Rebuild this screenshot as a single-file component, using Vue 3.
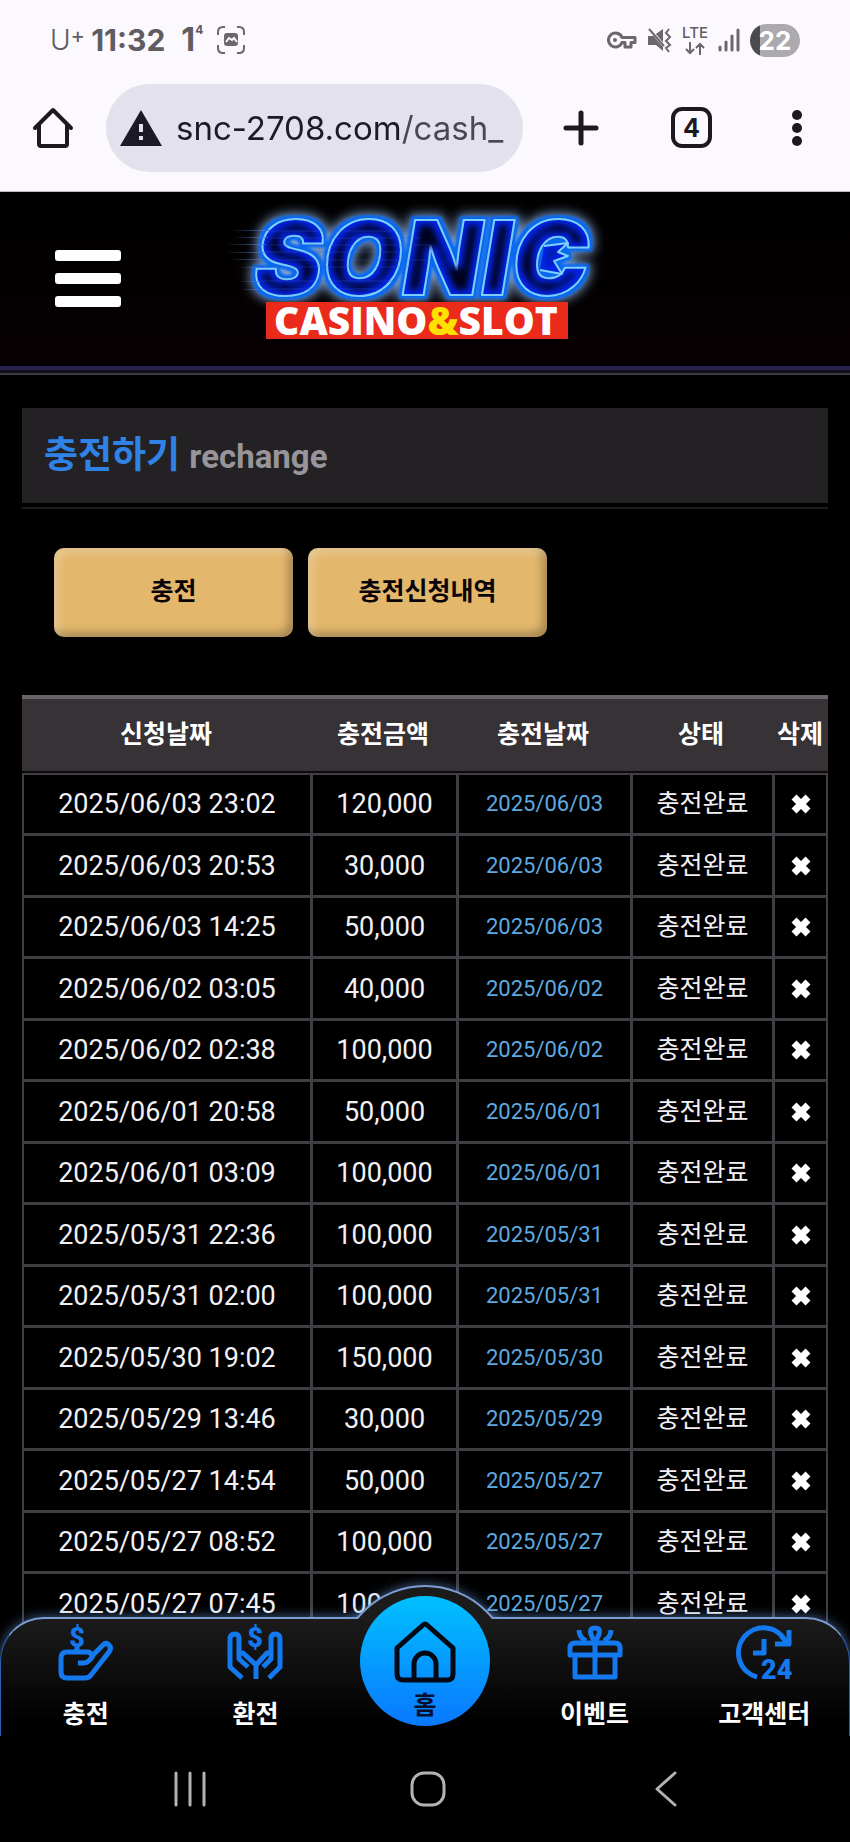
<script setup>
  import { ref } from 'vue'

  const address = ref('snc-2708.com/cash_')

  const columns = ['신청날짜', '충전금액', '충전날짜', '상태', '삭제']

  const rows = ref([
    { requested: '2025/06/03 23:02', amount: '120,000', charged: '2025/06/03' },
    { requested: '2025/06/03 20:53', amount: '30,000', charged: '2025/06/03' },
    { requested: '2025/06/03 14:25', amount: '50,000', charged: '2025/06/03' },
    { requested: '2025/06/02 03:05', amount: '40,000', charged: '2025/06/02' },
    { requested: '2025/06/02 02:38', amount: '100,000', charged: '2025/06/02' },
    { requested: '2025/06/01 20:58', amount: '50,000', charged: '2025/06/01' },
    { requested: '2025/06/01 03:09', amount: '100,000', charged: '2025/06/01' },
    { requested: '2025/05/31 22:36', amount: '100,000', charged: '2025/05/31' },
    { requested: '2025/05/31 02:00', amount: '100,000', charged: '2025/05/31' },
    { requested: '2025/05/30 19:02', amount: '150,000', charged: '2025/05/30' },
    { requested: '2025/05/29 13:46', amount: '30,000', charged: '2025/05/29' },
    { requested: '2025/05/27 14:54', amount: '50,000', charged: '2025/05/27' },
    { requested: '2025/05/27 08:52', amount: '100,000', charged: '2025/05/27' },
    { requested: '2025/05/27 07:45', amount: '100,000', charged: '2025/05/27' },
  ])

  function removeRow(index) {
    rows.value.splice(index, 1)
  }
</script>

<template>
  <div class="screen">
    <div class="status">
      <div class="status-side">
        <span class="carrier">U<sup>+</sup></span>
        <span class="clock">11:32</span>
        <span class="badge">1<sup>4</sup></span>
        <svg width="28" height="28" viewBox="0 0 28 28" fill="none" stroke="#6a676d" stroke-width="2">
          <path d="M1 9V6Q1 1 6 1H8M20 1H22Q27 1 27 6V9M27 19V22Q27 27 22 27H20M8 27H6Q1 27 1 22V19" />
          <rect x="7" y="7" width="14" height="13" rx="3" fill="#6a676d" stroke="none" />
          <path d="M9 16L12 12L15 14L17 12L20 16" stroke="#fbf8fe" />
        </svg>
      </div>
      <div class="status-side right">
        <svg width="30" height="18" viewBox="0 0 30 18" fill="none" stroke="#6a676d" stroke-width="3">
          <path d="M15 6.500A7 7 0 1 0 15 11.500H18V16H24V11.500H28V6.500Z" stroke-linejoin="round" />
          <circle cx="8" cy="9" r="2" fill="#6a676d" stroke="none" />
        </svg>
        <svg width="25" height="26" viewBox="0 0 25 26" fill="none" stroke="#6a676d" stroke-width="2">
          <path d="M1 9H6L16 2V24L9 18H1Z" fill="#6a676d" stroke="none" />
          <path d="M1 0L18 20" stroke="#fbf8fe" stroke-width="3" />
          <path d="M2 2L17 19" />
          <path d="M22 2L19 6L23 10L19 14L23 18L19 21L22 25" />
        </svg>
        <span class="lte">
          LTE
          <svg width="20" height="13" viewBox="0 0 20 13" fill="none" stroke="#6a676d" stroke-width="2">
            <path d="M5 0V11M1 7L5 11L9 7M15 13V2M11 6L15 2L19 6" />
          </svg>
        </span>
        <svg width="22" height="24" viewBox="0 0 22 24" stroke="#6a676d" stroke-width="3" stroke-linecap="round">
          <path d="M2 19V22M8 14V22M14 8V22M20 2V22" />
        </svg>
        <span class="battery">22</span>
      </div>
    </div>

    <div class="toolbar">
      <button class="tool" aria-label="Home">
        <svg width="42" height="42" viewBox="0 0 42 42" fill="none" stroke="#1c1a20" stroke-width="4" stroke-linecap="round" stroke-linejoin="round">
          <path d="M3 21L21 3L39 21M7 18V37Q7 39 9 39H33Q35 39 35 37V18" />
        </svg>
      </button>
      <label class="address">
        <svg width="42" height="36" viewBox="0 0 42 36">
          <path d="M21 0L42 36H0Z" fill="#1c1a26" />
          <path d="M21 14V22M21 26V30" stroke="#e3e1ec" stroke-width="4" />
        </svg>
        <input v-model="address" type="text" aria-label="Address">
      </label>
      <button class="tool plus" aria-label="New tab">
        <svg width="36" height="36" viewBox="0 0 36 36" stroke="#1c1a20" stroke-width="5" stroke-linecap="round">
          <path d="M18 3V33M3 18H33" />
        </svg>
      </button>
      <button class="tool tabs">4</button>
      <button class="tool" aria-label="Menu">
        <svg width="10" height="36" viewBox="0 0 10 36" fill="#1c1a20">
          <circle cx="5" cy="5" r="5" />
          <circle cx="5" cy="18" r="5" />
          <circle cx="5" cy="31" r="5" />
        </svg>
      </button>
    </div>

    <div class="page">
      <header class="header">
        <button class="hamburger" aria-label="Menu">
          <span></span><span></span><span></span>
        </button>
        <svg class="logo" width="410" height="160" viewBox="0 0 410 160" role="img" aria-label="SONIC CASINO&SLOT">
          <defs>
            <linearGradient id="streak">
              <stop offset="0" stop-color="#6a8ae0" stop-opacity="0" />
              <stop offset="1" stop-color="#4a6ad8" stop-opacity="0.800" />
            </linearGradient>
            <!-- soft halo, blue rim and dark core, all from one outline -->
            <filter id="neon" x="-10%" y="-30%" width="120%" height="160%" color-interpolation-filters="sRGB">
              <feMorphology in="SourceAlpha" operator="dilate" radius="4" result="wide" />
              <feGaussianBlur in="wide" stdDeviation="6" result="wideBlur" />
              <feFlood flood-color="#86aadc" />
              <feComposite in2="wideBlur" operator="in" result="halo" />
              <feMorphology in="SourceAlpha" operator="dilate" radius="3" result="near" />
              <feGaussianBlur in="near" stdDeviation="1" result="nearBlur" />
              <feFlood flood-color="#0a68ee" />
              <feComposite in2="nearBlur" operator="in" result="rim" />
              <feMorphology in="SourceAlpha" operator="erode" radius="6" result="thin" />
              <feGaussianBlur in="thin" stdDeviation="3" result="thinBlur" />
              <feFlood flood-color="#00021c" />
              <feComposite in2="thinBlur" operator="in" result="core" />
              <feMerge>
                <feMergeNode in="halo" />
                <feMergeNode in="rim" />
                <feMergeNode in="SourceGraphic" />
                <feMergeNode in="core" />
              </feMerge>
            </filter>
          </defs>
          <g class="sonic" filter="url(#neon)">
            <text x="34" y="95">SONIC</text>
            <path d="M324 46L348 43L338 52L348 56L334 61L342 74L320 70" />
          </g>
          <path
            d="M50 31H190M50 38H200M50 45H210M46 52H180M46 60H210M44 67H190M40 81H180M38 89H170"
            fill="none" stroke="#3c5cd8" stroke-opacity="0.300" stroke-width="1"
          />
          <g fill="url(#streak)">
            <rect x="10" y="30" width="40" height="1" />
            <rect x="14" y="37" width="34" height="1" />
            <rect x="6" y="44" width="40" height="1" />
            <rect x="6" y="52" width="40" height="1" />
            <rect x="10" y="59" width="34" height="1" />
            <rect x="18" y="67" width="26" height="1" />
            <rect x="20" y="81" width="20" height="1" />
            <rect x="22" y="89" width="16" height="1" />
          </g>
          <rect x="46" y="102" width="302" height="37" fill="#ea2a1a" />
          <text class="casino" x="196" y="135" text-anchor="middle">CASINO<tspan fill="#ffe000">&amp;</tspan>SLOT</text>
        </svg>
      </header>

      <main class="content">
        <h1 class="title">충전하기 <small>rechange</small></h1>
        <div class="actions">
          <button>충전</button>
          <button>충전신청내역</button>
        </div>

        <table class="history">
          <colgroup>
            <col>
            <col class="col-amount">
            <col class="col-charged">
            <col class="col-state">
            <col class="col-remove">
          </colgroup>
          <thead>
            <tr>
              <th v-for="column in columns" :key="column">{{ column }}</th>
            </tr>
          </thead>
          <tbody>
            <tr v-for="(row, index) in rows" :key="row.requested">
              <td>{{ row.requested }}</td>
              <td>{{ row.amount }}</td>
              <td class="charged">{{ row.charged }}</td>
              <td class="state">충전완료</td>
              <td>
                <button class="remove" aria-label="삭제" @click="removeRow(index)">
                  <svg width="20" height="20" viewBox="0 0 20 20" stroke="#fff" stroke-width="7">
                    <path d="M3 3L17 17M17 3L3 17" />
                  </svg>
                </button>
              </td>
            </tr>
          </tbody>
        </table>
      </main>

      <nav class="dock">
        <a href="#">
          <svg class="icon" viewBox="0 0 54 54">
            <path d="M8 26H28Q32 26 33 30L44 19Q47 16 50 19Q53 22 50 26L32 49Q30 52 26 52H8Q2 52 2 46V32Q2 26 8 26Z" />
            <path d="M19 37H25Q29 37 34 30M18 21V26" />
            <text x="18" y="21" text-anchor="middle">$</text>
          </svg>
          충전
        </a>
        <a href="#">
          <svg class="icon" viewBox="0 0 54 54">
            <path d="M14 52L2 41V13Q2 8 7 8Q11 8 11 13V27H15L28 39V53M11 27V33L20 41" />
            <path d="M41 52L52 41V13Q52 8 47 8Q43 8 43 13V27H39L28 39M43 27V33L35 41" />
            <text x="27" y="21" text-anchor="middle">$</text>
          </svg>
          환전
        </a>
        <div class="home-slot">
          <a class="home" href="#">
            <svg width="62" height="62" viewBox="0 0 62 62" fill="none" stroke="#020814" stroke-width="5" stroke-linejoin="round">
              <path d="M3 27L29 4Q31 2 33 4L59 27V53Q59 59 53 59H9Q3 59 3 53Z" />
              <path d="M20 59V43A11 11 0 0 1 42 43V59" />
            </svg>
            홈
          </a>
        </div>
        <a href="#">
          <svg class="icon" viewBox="0 0 54 54">
            <path d="M2 29V22Q2 17 7 17H47Q52 17 52 22V29ZM7 29V51H47V29M27 17V51" />
            <path d="M27 16Q18 2 27 2Q36 2 27 16M11 4Q11 11 18 15M43 4Q43 11 36 15" />
          </svg>
          이벤트
        </a>
        <a href="#">
          <svg class="icon" viewBox="0 0 54 54">
            <path d="M20 51A25 25 0 1 1 49 16M52 4V18H38M44 10L51 17M27 13V27H16" />
            <text x="24" y="53">24</text>
          </svg>
          고객센터
        </a>
      </nav>
    </div>

    <div class="system">
      <button aria-label="Recents">
        <svg width="32" height="36" viewBox="0 0 32 36"><path d="M2 2V34M16 2V34M30 2V34" /></svg>
      </button>
      <button aria-label="Home">
        <svg width="36" height="36" viewBox="0 0 36 36"><rect x="2" y="2" width="32" height="32" rx="12" /></svg>
      </button>
      <button aria-label="Back">
        <svg width="24" height="36" viewBox="0 0 24 36"><path d="M21 2L3 18L21 34" /></svg>
      </button>
    </div>
  </div>
</template>

<style>
  body {
    margin: 0;
    background: #000;
  }
</style>

<style scoped>
  .screen {
    height: 100vh;
    display: flex;
    flex-direction: column;
    font-family: Roboto, "Noto Sans CJK KR", sans-serif;
    color: #f2f0f4;
  }

  button {
    padding: 0;
    border: none;
    background: none;
    font-family: inherit;
    cursor: pointer;
  }

  svg {
    flex-shrink: 0;
  }

  /* status bar */
  .status {
    height: 80px;
    padding: 0 50px;
    flex-shrink: 0;
    display: flex;
    justify-content: space-between;
    align-items: center;
    background: #fbf8fe;
    font-family: Inter, sans-serif;
    color: #5f5c62;
  }

  .status-side {
    display: flex;
    align-items: center;
  }

  .right {
    gap: 10px;
  }

  .status sup {
    line-height: 1;
    vertical-align: top;
  }

  .carrier {
    margin-right: 6px;
    font-size: 28px;
    font-weight: 300;
    line-height: 32px;
  }

  .carrier sup {
    font-size: 22px;
    font-weight: 400;
  }

  .clock {
    margin-right: 16px;
    font-size: 30px;
    font-weight: 700;
  }

  .badge {
    margin-right: 14px;
    font-size: 32px;
    font-weight: 700;
    line-height: 32px;
  }

  .badge sup {
    font-size: 12px;
  }

  .lte {
    display: flex;
    flex-direction: column;
    align-items: center;
    gap: 2px;
    font-size: 15px;
    font-weight: 500;
    line-height: 14px;
  }

  .battery {
    width: 50px;
    border-radius: 17px;
    background: linear-gradient(90deg, #4c494f 10px, #acaaae 10px);
    font-size: 26px;
    font-weight: 700;
    line-height: 33px;
    text-align: center;
    color: #fff;
  }

  /* browser toolbar */
  .toolbar {
    height: 112px;
    padding: 0 48px 16px 32px;
    box-sizing: border-box;
    flex-shrink: 0;
    display: flex;
    align-items: center;
    border-bottom: 1px solid #b9b7bb;
    background: #fbf8fe;
  }

  .tool {
    flex-shrink: 0;
    display: flex;
    align-items: center;
    justify-content: center;
  }

  .address {
    min-width: 0;
    height: 88px;
    margin: 0 40px 0 32px;
    padding: 0 8px 0 14px;
    box-sizing: border-box;
    flex: 1;
    display: flex;
    align-items: center;
    gap: 14px;
    border-radius: 44px;
    background: #e3e1ec;
  }

  .address input {
    min-width: 0;
    padding: 0;
    flex: 1;
    border: none;
    outline: none;
    background: linear-gradient(90deg, #1c1a26 225px, #4a4754 225px);
    background-clip: text;
    -webkit-background-clip: text;
    font-family: Inter, sans-serif;
    font-size: 33px;
    line-height: 48px;
    color: transparent;
  }

  .plus {
    margin-right: 72px;
  }

  .tabs {
    width: 41px;
    height: 41px;
    margin-right: 80px;
    box-sizing: border-box;
    border: 4px solid #1c1a20;
    border-radius: 11px;
    font-family: Inter, sans-serif;
    font-size: 25px;
    font-weight: 700;
    color: #1c1a20;
  }

  /* web page */
  .page {
    min-height: 0;
    position: relative;
    flex: 1;
    overflow: hidden;
    background: #000;
  }

  .header {
    padding: 8px 55px 6px;
    display: grid;
    grid-template-columns: 1fr auto 1fr;
    align-items: center;
    border-bottom: 4px solid #26244e;
    background: linear-gradient(180deg, #000, #070002);
    box-shadow: 0 3px #101016, 0 5px #3d3b3f;
  }

  .hamburger {
    width: 66px;
    margin-bottom: 4px;
    display: flex;
    flex-direction: column;
    gap: 12px;
  }

  .hamburger span {
    height: 11px;
    border-radius: 3px;
    background: #fff;
  }

  .logo {
    display: block;
    overflow: visible;
  }

  .sonic {
    font-family: Inter, sans-serif;
    font-size: 103px;
    font-weight: 900;
    font-style: italic;
    fill: #0424e6;
    stroke: #7ed4ff;
    stroke-width: 2px;
    stroke-linejoin: round;
  }

  .casino {
    font-family: "Open Sans", sans-serif;
    font-size: 39px;
    font-weight: 800;
    fill: #fff;
  }

  .content {
    padding: 38px 22px 0;
  }

  .title {
    margin: 0;
    padding: 2px 22px 0;
    background: #232124;
    font-size: 37px;
    font-weight: 700;
    line-height: 92px;
    color: #2f82e6;
    box-shadow: 0 4px #000, 0 6px #1d1b1e;
  }

  .title small {
    font-size: 33px;
    font-weight: 700;
    color: #98959a;
  }

  .actions {
    padding: 45px 32px 58px;
    display: flex;
    gap: 15px;
  }

  .actions button {
    width: 239px;
    height: 89px;
    padding-bottom: 8px;
    border-radius: 10px;
    background: #e3b76c;
    box-shadow: inset 4px 4px 10px rgba(255, 255, 255, 0.3), inset -4px -4px 10px rgba(0, 0, 0, 0.3);
    font-size: 25px;
    font-weight: 700;
    color: #0a0408;
  }

  .history {
    width: 100%;
    border-spacing: 0;
    table-layout: fixed;
    font-size: 27px;
    line-height: 36px;
    text-align: center;
  }

  .col-amount {
    width: 146px;
  }

  .col-charged {
    width: 174px;
  }

  .col-state {
    width: 142px;
  }

  .col-remove {
    width: 56px;
  }

  .history th {
    height: 72px;
    padding: 0;
    border-top: 4px solid #68646a;
    border-bottom: 2px solid #0c0a0d;
    background: #363235;
    font-size: 25px;
    font-weight: 700;
    color: #fff;
  }

  .history td {
    height: 58px;
    padding: 0;
    border: solid #403e43;
    border-width: 0 0 3px 3px;
  }

  .history tr:nth-child(even) td {
    height: 59px;
  }

  .history tr:first-child td {
    border-top-width: 2px;
  }

  .history td:first-child {
    border-left-width: 2px;
  }

  .history td:last-child {
    border-right-width: 2px;
  }

  .history .charged {
    font-size: 22px;
    color: #5eaae0;
  }

  .history .state {
    font-size: 25px;
  }

  .remove {
    display: block;
    margin: 0 auto;
  }

  .remove svg {
    display: block;
  }

  /* bottom menu */
  .dock {
    height: 119px;
    box-sizing: border-box;
    position: absolute;
    left: 0;
    right: 0;
    bottom: 0;
    display: grid;
    grid-template-columns: repeat(5, 1fr);
    border: 1px solid #2a62b4;
    border-top: 2px solid #7c9cd4;
    border-bottom: none;
    border-radius: 44px 44px 0 0;
    background: linear-gradient(180deg, #1b1b1c, #000 90%);
    box-shadow: 0 0 12px rgba(110, 160, 230, 0.6);
  }

  /* arc behind the home button */
  .dock::before {
    content: "";
    width: 176px;
    height: 176px;
    box-sizing: border-box;
    position: absolute;
    top: -34px;
    left: calc(50% - 88px);
    border: 2px solid #7c9cd4;
    border-radius: 50%;
    background: #1b1b1c;
    box-shadow: 0 0 12px rgba(110, 160, 230, 0.6);
    clip-path: inset(-16px -16px 142px -16px);
  }

  .dock a {
    padding-top: 7px;
    display: flex;
    flex-direction: column;
    align-items: center;
    gap: 18px;
    font-size: 25px;
    font-weight: 700;
    line-height: 34px;
    text-decoration: none;
    white-space: nowrap;
    color: #fff;
  }

  .icon {
    width: 54px;
    height: 54px;
    overflow: visible;
    fill: none;
    stroke: #1478ee;
    stroke-width: 5px;
    stroke-linejoin: round;
  }

  .icon text {
    fill: #1478ee;
    stroke: none;
    font-size: 27px;
    font-weight: 900;
  }

  .home-slot {
    position: relative;
  }

  .dock .home {
    width: 130px;
    height: 130px;
    padding-top: 25px;
    box-sizing: border-box;
    position: absolute;
    top: -23px;
    left: calc(50% - 65px);
    gap: 6px;
    border-radius: 50%;
    background: linear-gradient(180deg, #00c0ff, #0a78ff);
    color: #04102c;
  }

  /* system navigation */
  .system {
    height: 106px;
    padding: 0 65px 0 71px;
    box-sizing: border-box;
    flex-shrink: 0;
    display: flex;
    background: #000;
  }

  .system button {
    flex: 1;
    display: flex;
    align-items: center;
    justify-content: center;
  }

  .system svg {
    fill: none;
    stroke: #b4b2b6;
    stroke-width: 3px;
    stroke-linecap: round;
    stroke-linejoin: round;
  }
</style>
